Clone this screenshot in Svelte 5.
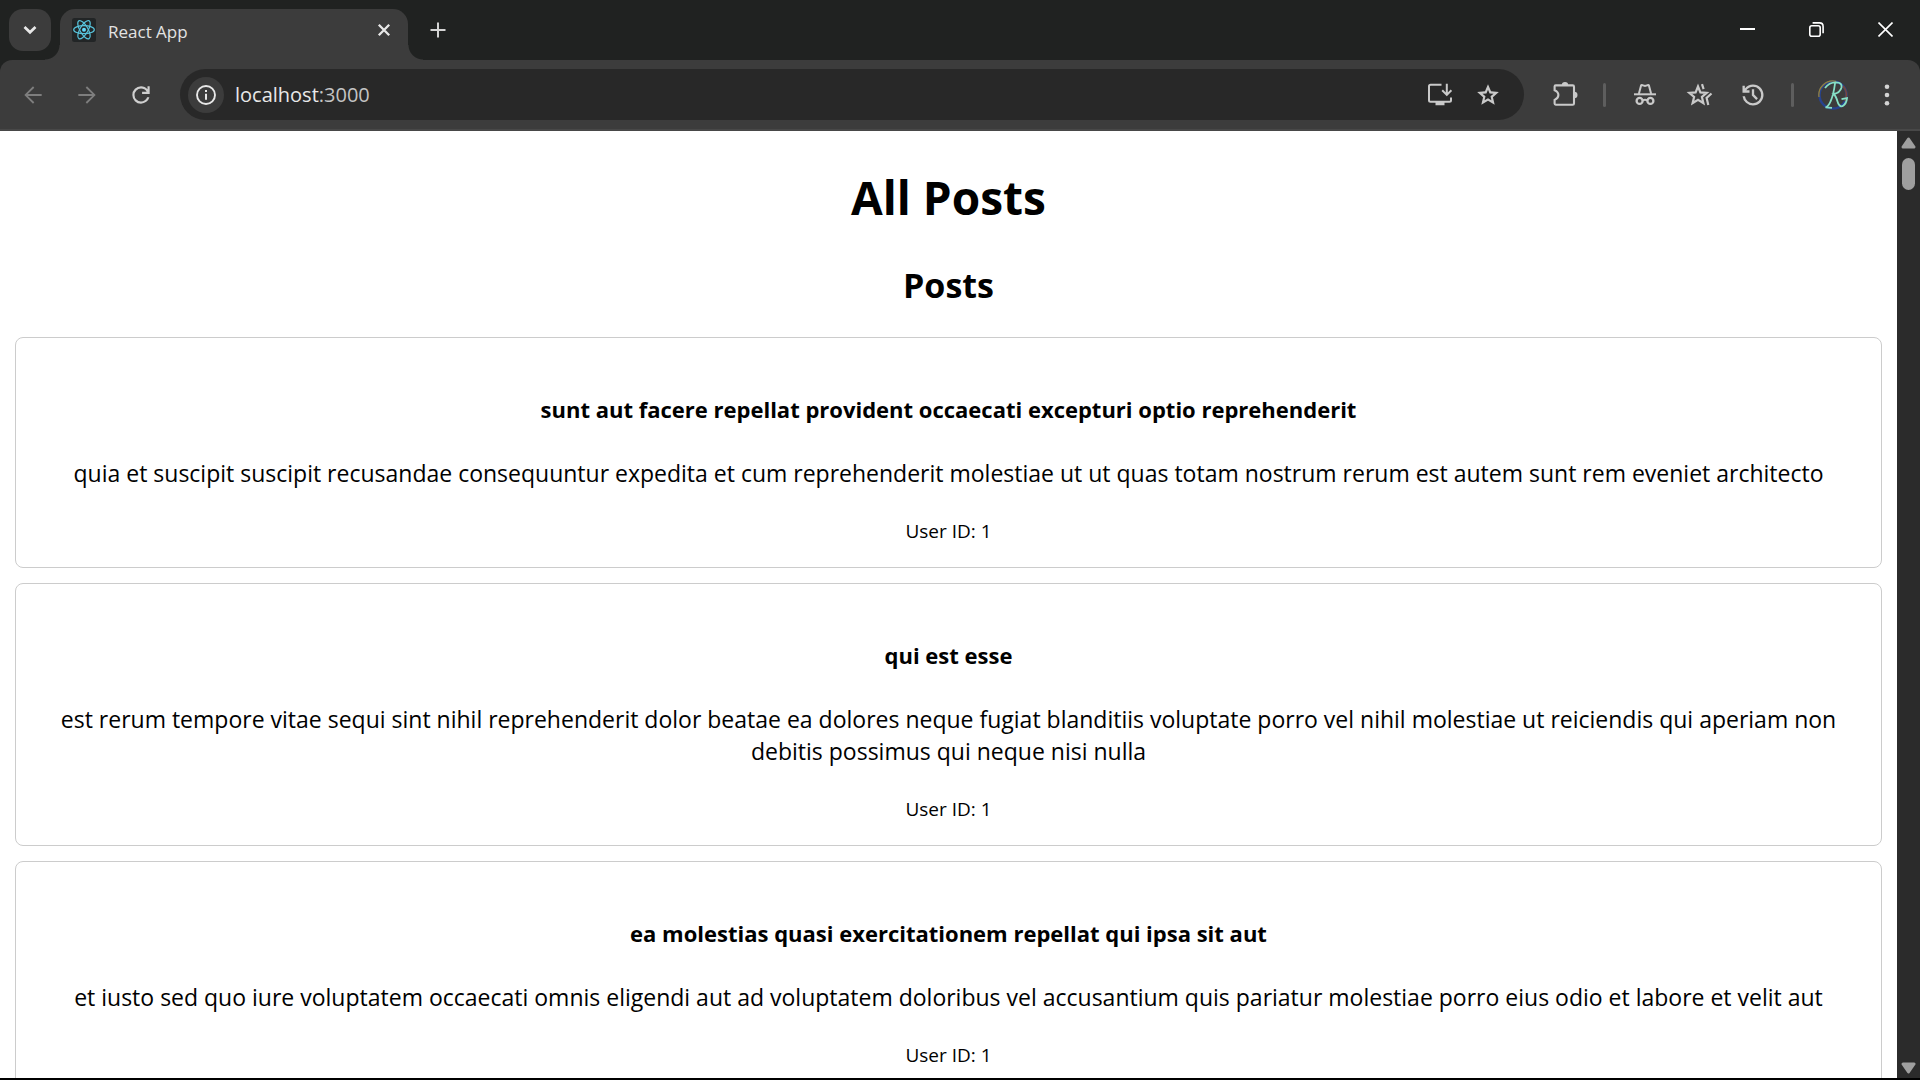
<script>
  const posts = [
    {
      id: 1,
      userId: 1,
      title: 'sunt aut facere repellat provident occaecati excepturi optio reprehenderit',
      body: 'quia et suscipit suscipit recusandae consequuntur expedita et cum reprehenderit molestiae ut ut quas totam nostrum rerum est autem sunt rem eveniet architecto'
    },
    {
      id: 2,
      userId: 1,
      title: 'qui est esse',
      body: 'est rerum tempore vitae sequi sint nihil reprehenderit dolor beatae ea dolores neque fugiat blanditiis voluptate porro vel nihil molestiae ut reiciendis qui aperiam non debitis possimus qui neque nisi nulla'
    },
    {
      id: 3,
      userId: 1,
      title: 'ea molestias quasi exercitationem repellat qui ipsa sit aut',
      body: 'et iusto sed quo iure voluptatem occaecati omnis eligendi aut ad voluptatem doloribus vel accusantium quis pariatur molestiae porro eius odio et labore et velit aut'
    }
  ];
</script>

<div class="browser">
  <header class="tabstrip">
    <button class="tab-search" aria-label="Search tabs">
      <svg width="14" height="10" viewBox="0 0 14 10"><path d="M1.5 2 7 7.3 12.5 2" fill="none" stroke="#e8e8e8" stroke-width="2.7" /></svg>
    </button>
    <div class="tab">
      <svg class="favicon" width="24" height="24" viewBox="0 0 24 24">
        <rect width="24" height="24" rx="2.5" fill="#222526" />
        <g fill="none" stroke="#58c4dc" stroke-width="1.2">
          <ellipse cx="12" cy="11.7" rx="10.3" ry="4" />
          <ellipse cx="12" cy="11.7" rx="10.3" ry="4" transform="rotate(60 12 11.7)" />
          <ellipse cx="12" cy="11.7" rx="10.3" ry="4" transform="rotate(120 12 11.7)" />
        </g>
        <circle cx="12" cy="11.7" r="2" fill="#61dafb" />
      </svg>
      <span class="tab-title">React App</span>
      <button class="tab-close" aria-label="Close tab">
        <svg width="14" height="14" viewBox="0 0 14 14"><path d="M1.8 1.8 12.2 12.2M12.2 1.8 1.8 12.2" stroke="#e8e8e8" stroke-width="2.3" /></svg>
      </button>
    </div>
    <button class="new-tab" aria-label="New tab">
      <svg width="16" height="16" viewBox="0 0 16 16"><path d="M8 .5V15.500M.5 8H15.500" stroke="#d4d4d4" stroke-width="2" /></svg>
    </button>
    <div class="window-controls">
      <button aria-label="Minimize">
        <svg width="15" height="15" viewBox="0 0 15 15"><path d="M0 7H15" stroke="#fff" stroke-width="2" /></svg>
      </button>
      <button aria-label="Restore">
        <svg width="15" height="15" viewBox="0 0 15 15" fill="none" stroke="#fff" stroke-width="1.600">
          <rect x=".8" y="3.800" width="10.400" height="10.400" rx="2" />
          <path d="M3.600 .9H10.500Q14.100 .9 14.100 4.500V11.200" />
        </svg>
      </button>
      <button aria-label="Close">
        <svg width="15" height="15" viewBox="0 0 15 15"><path d="M.5 .5 14.500 14.500M14.500 .5 .5 14.500" stroke="#fff" stroke-width="1.600" /></svg>
      </button>
    </div>
  </header>

  <nav class="toolbar">
    <div class="nav-buttons">
      <button aria-label="Back">
        <svg width="26" height="26" viewBox="0 0 24 24"><path d="m12 20-8-8 8-8 1.200 1.200L7.250 11.150H20v1.700H7.250l5.950 5.950Z" fill="#7e7e7e" /></svg>
      </button>
      <button aria-label="Forward">
        <svg width="26" height="26" viewBox="0 0 24 24"><path d="m12 20 8-8-8-8-1.200 1.200 5.950 5.950H4v1.700h12.750l-5.950 5.950Z" fill="#7e7e7e" /></svg>
      </button>
      <button aria-label="Reload">
        <svg width="26" height="26" viewBox="0 0 24 24"><path d="M12 20q-3.350 0-5.675-2.325T4 12q0-3.350 2.325-5.675T12 4q1.725 0 3.300.713T18 6.750V4h2v7h-7V9h4.200q-.8-1.400-2.187-2.200T12 6Q9.500 6 7.750 7.750T6 12q0 2.500 1.750 4.250T12 18q1.925 0 3.475-1.100T17.650 14h2.100q-.7 2.650-2.850 4.325T12 20" fill="#cfcfcf" /></svg>
      </button>
    </div>

    <div class="omnibox">
      <button class="site-info" aria-label="View site information">
        <svg width="22" height="22" viewBox="0 0 22 22">
          <circle cx="11" cy="11" r="9" fill="none" stroke="#e8e8e8" stroke-width="1.900" />
          <path d="M11 9.800V15.800M11 6V8.100" stroke="#e8e8e8" stroke-width="2" />
        </svg>
      </button>
      <a class="url" href="http://localhost:3000">localhost<span>:3000</span></a>
      <div class="omni-actions">
        <button aria-label="Install app">
          <svg width="26" height="26" viewBox="0 0 26 26" fill="none" stroke="#c9c9c9" stroke-width="2">
            <path d="M14.500 2.700H3.500Q2 2.700 2 4.200V18.300Q2 19.800 3.500 19.800H22.500Q24 19.800 24 18.300V15.500" />
            <path d="M8.500 21.500H17.500" stroke-width="3.500" />
            <path d="M19.800 1.800V12M15.200 8.300 19.800 12.900 24.400 8.300" />
          </svg>
        </button>
        <button aria-label="Bookmark this tab">
          <svg width="26" height="26" viewBox="0 0 24 24"><path d="m8.850 16.825 3.150-1.900 3.150 1.925-.825-3.600 2.775-2.400-3.650-.325-1.450-3.400-1.450 3.375-3.650.325 2.775 2.425zM5.825 21l1.625-7.025L2 9.250l7.200-.625L12 2l2.800 6.625 7.200.625-5.450 4.725L18.175 21 12 17.275z" fill="#c9c9c9" /></svg>
        </button>
      </div>
    </div>

    <div class="toolbar-actions">
      <button aria-label="Extensions">
        <svg width="28" height="28" viewBox="0 0 28 28">
          <path d="M3.600 5.500Q3.600 4.400 4.700 4.400H21.700Q23 4.400 23 5.700V22.500Q23 23.700 21.700 23.700H4.700Q3.600 23.700 3.600 22.600V18.900Q7.400 17.300 7.400 14.100 7.400 10.900 3.600 9.300Z" fill="none" stroke="#c9c9c9" stroke-width="2.100" />
          <path d="M10.800 4.200a3.200 3.200 0 0 1 6.400 0ZM23.200 10.700a3.300 3.300 0 0 1 0 6.600Z" fill="#c9c9c9" />
        </svg>
      </button>
      <span class="divider"></span>
      <button aria-label="Incognito">
        <svg width="24" height="24" viewBox="0 0 24 24" fill="none" stroke="#c9c9c9" stroke-width="2">
          <path d="M1 11.300H23" />
          <path d="M5.800 11 8 2.700Q8.300 1.900 9.200 2.100L12 2.900 14.800 2.100Q15.700 1.900 16 2.700L18.200 11" />
          <circle cx="6.600" cy="17.900" r="3" stroke-width="2.300" />
          <circle cx="17.400" cy="17.900" r="3" stroke-width="2.300" />
          <path d="M9.500 17.400Q12 16 14.500 17.400" />
        </svg>
      </button>
      <button aria-label="Bookmarks">
        <svg width="28" height="28" viewBox="0 0 28 28" fill="none" stroke="#c9c9c9" stroke-width="2.200">
          <path d="m13 5.500 2.400 5.900 6.300.5-4.800 4.100 1.500 6.200L13 18.900l-5.400 3.300L9.100 16l-4.800-4.100 6.300-.5Z" />
          <path d="M17 3.200 18.600 8.100M26.500 12.500 21.600 16.900 23.300 24" />
        </svg>
      </button>
      <button aria-label="History">
        <svg width="28" height="28" viewBox="0 0 24 24"><path d="M12 21q-3.450 0-6.013-2.288T3.050 13H5.100q.35 2.600 2.313 4.300T12 19q2.925 0 4.963-2.038T19 12t-2.038-4.963T12 5q-1.725 0-3.225.8T6.250 8H9v2H3V4h2v2.350q1.275-1.600 3.113-2.475T12 3q1.875 0 3.513.713t2.850 1.924 1.925 2.850T21 12t-.713 3.513-1.924 2.850-2.850 1.925T12 21m2.800-4.800L11 12.400V7h2v4.600l3.200 3.200z" fill="#c9c9c9" /></svg>
      </button>
      <span class="divider"></span>
      <button aria-label="Profile">
        <svg width="32" height="32" viewBox="0 0 32 32" fill="none">
          <circle cx="16" cy="16" r="13.500" stroke="#27438f" stroke-width="2.400" />
          <path d="M2 18A14 14 0 0 1 19 2.300" stroke="#94803a" stroke-width="1.300" />
          <path d="M26 7A13.500 13.500 0 0 1 28 22" stroke="#7a4638" stroke-width="1.800" />
          <path d="M8 9Q12 3.500 19 3.400 25.500 3.500 24.500 8.500 23 14 16.500 15 19 17 20.500 22.500 22 28 25.500 27.200 29.500 25 30 19.200L24.500 20.200M18 4.500Q16.500 16 13.500 22.500 11.500 27.500 8.500 28.300L15 28.800" stroke="#86e0c6" stroke-width="1.800" />
        </svg>
      </button>
      <button aria-label="Browser menu">
        <svg width="6" height="24" viewBox="0 0 6 24" fill="#d4d4d4"><circle cx="3" cy="3.700" r="2.300" /><circle cx="3" cy="12" r="2.300" /><circle cx="3" cy="20.300" r="2.300" /></svg>
      </button>
    </div>
  </nav>

  <div class="viewport">
    <main>
      <h1>All Posts</h1>
      <h2>Posts</h2>
      <div class="posts">
        {#each posts as post (post.id)}
          <article>
            <h3>{post.title}</h3>
            <p>{post.body}</p>
            <small>User ID: {post.userId}</small>
          </article>
        {/each}
      </div>
    </main>
    <div class="scrollbar">
      <svg width="15" height="12" viewBox="0 0 15 12"><path d="M7.500 2 13 10H2Z" fill="#9f9f9f" stroke="#9f9f9f" stroke-width="3" stroke-linejoin="round" /></svg>
      <div class="thumb"></div>
      <svg class="down" width="15" height="12" viewBox="0 0 15 12"><path d="M7.500 10 13 2H2Z" fill="#9f9f9f" stroke="#9f9f9f" stroke-width="3" stroke-linejoin="round" /></svg>
    </div>
  </div>
</div>

<style>
  :global(body) {
    margin: 0;
    background: #000;
  }

  .browser {
    display: flex;
    flex-direction: column;
    box-sizing: border-box;
    height: 100vh;
    border-bottom: 2px solid #000;
    overflow: hidden;
    background: #202221;
    font-family: 'Open Sans', 'Noto Sans', sans-serif;
  }

  button {
    display: flex;
    align-items: center;
    justify-content: center;
    flex: none;
    padding: 0;
    border: 0;
    background: none;
  }

  svg {
    display: block;
    flex: none;
  }

  .tabstrip {
    display: flex;
    flex: none;
    height: 60px;
  }

  .tab-search {
    width: 42px;
    height: 42px;
    margin: 9px;
    border-radius: 14px;
    background: #3c3c3c;
  }

  .tab {
    position: relative;
    display: flex;
    align-items: center;
    gap: 12px;
    box-sizing: border-box;
    width: 348px;
    margin-top: 9px;
    padding: 0 12px 9px;
    border-radius: 15px 15px 0 0;
    background: #3c3c3c;
  }

  .tab::before,
  .tab::after {
    content: '';
    position: absolute;
    bottom: 0;
    width: 15px;
    height: 15px;
  }

  .tab::before {
    right: 100%;
    background: radial-gradient(circle at 0 0, transparent 14px, #3c3c3c 15px);
  }

  .tab::after {
    left: 100%;
    background: radial-gradient(circle at 100% 0, transparent 14px, #3c3c3c 15px);
  }

  .tab-title {
    flex: 1;
    padding-top: 3px;
    color: #e3e3e3;
    font-size: 17px;
    line-height: 24px;
  }

  .tab-close {
    width: 24px;
    height: 24px;
  }

  .new-tab {
    width: 42px;
    height: 42px;
    margin: 9px;
  }

  .window-controls {
    display: flex;
    margin-left: auto;
  }

  .window-controls button {
    width: 69px;
    height: 59px;
  }

  .toolbar {
    display: flex;
    flex: none;
    align-items: center;
    padding: 9px 15px;
    border-bottom: 2px solid #484848;
    border-radius: 12px 12px 0 0;
    background: #3c3c3c;
  }

  .nav-buttons,
  .toolbar-actions {
    display: flex;
    align-items: center;
    gap: 18px;
  }

  .nav-buttons button,
  .toolbar-actions button {
    width: 36px;
    height: 36px;
  }

  .omnibox {
    display: flex;
    flex: 1;
    align-items: center;
    height: 51px;
    margin: 0 23px 0 21px;
    padding: 0 18px 0 8px;
    border-radius: 26px;
    background: #282828;
  }

  .site-info {
    width: 36px;
    height: 36px;
    border-radius: 50%;
    background: #3c3c3c;
  }

  .url {
    flex: 1;
    margin-left: 11px;
    color: #e8e8e8;
    font-size: 20px;
    line-height: 28px;
    text-decoration: none;
  }

  .url span {
    color: #c4c4c4;
  }

  .omni-actions {
    display: flex;
    gap: 12px;
  }

  .omni-actions button {
    width: 36px;
    height: 36px;
  }

  .divider {
    width: 3px;
    height: 24px;
    margin: 0 3px 0 2px;
    border-radius: 2px;
    background: #5e5e5e;
  }

  .viewport {
    display: flex;
    flex: 1;
    min-height: 0;
    background: #fff;
  }

  main {
    flex: 1;
    min-width: 0;
    padding: 34px 15px 0;
    overflow: hidden;
    color: #000;
    text-align: center;
  }

  h1 {
    margin: 0 0 32px;
    font-size: 46px;
    line-height: 64px;
  }

  h2 {
    margin: 0 0 28px;
    font-size: 34px;
    line-height: 48px;
  }

  .posts {
    display: flex;
    flex-direction: column;
    gap: 15px;
  }

  article {
    padding: 55px 22px 22px;
    border: 1px solid #ccc;
    border-radius: 8px;
  }

  h3 {
    margin: 0 0 32px;
    font-size: 22px;
    line-height: 32px;
  }

  p {
    margin: 0 0 28px;
    font-size: 23px;
    line-height: 32px;
  }

  small {
    display: block;
    font-size: 19px;
    line-height: 28px;
  }

  .scrollbar {
    display: flex;
    flex: none;
    flex-direction: column;
    align-items: center;
    box-sizing: border-box;
    width: 23px;
    padding: 6px 0 4px;
    background: #2b2b2b;
  }

  .thumb {
    width: 13px;
    height: 32px;
    margin-top: 9px;
    border-radius: 7px;
    background: #9f9f9f;
  }

  .down {
    margin-top: auto;
  }
</style>
